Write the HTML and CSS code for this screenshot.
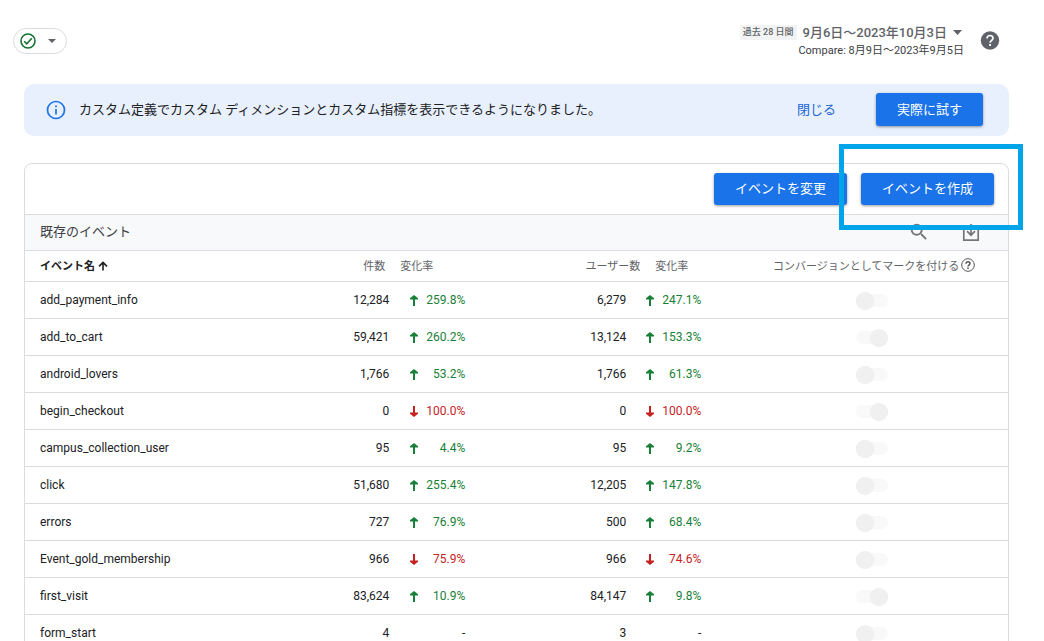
FILE: index.html
```
<!DOCTYPE html>
<html lang="ja">
<head>
<meta charset="utf-8">
<meta name="viewport" content="width=device-width, initial-scale=1">
<title>イベント</title>
<link rel="stylesheet" href="styles.css">
</head>
<body>
<svg class="sprite" aria-hidden="true">
  <symbol id="up" viewBox="0 0 10 12"><path d="M4 12V5.500H1V4.300L5 1l4 3.300v1.200H6V12z" fill="currentColor"/></symbol>
  <symbol id="down" viewBox="0 0 10 12"><path d="M4 1v6.500H1v1.200L5 12l4-3.300V7.500H6V1z" fill="currentColor"/></symbol>
</svg>
<header class="topbar">
  <button class="status" type="button" aria-label="ステータス">
    <svg width="18" height="18" viewBox="0 0 18 18" fill="none" stroke="#137333" stroke-width="1.600"><circle cx="9" cy="9" r="7"/><path d="M5.200 9.200 7.800 11.800l5-5.600"/></svg>
    <svg width="8" height="4" viewBox="0 0 8 4"><path d="M0 0h8L4 4z" fill="#5f6368"/></svg>
  </button>
  <div class="dates">
    <button class="range" type="button">
      <span class="badge">過去 28 日間</span>
      <span>9月6日～2023年10月3日</span>
      <svg width="9" height="5" viewBox="0 0 9 5"><path d="M0 0h9L4.500 5z" fill="#5f6368"/></svg>
    </button>
    <div class="compare">Compare: 8月9日～2023年9月5日</div>
  </div>
  <button class="icon-button" type="button" aria-label="ヘルプ">
    <svg width="20" height="20" viewBox="0 0 20 20"><circle cx="10" cy="9.500" r="9.200" fill="#5f6368"/><path d="M7 7.500c0-1.800 1.300-3 3-3s3 1.100 3 2.700c0 2-2.900 2.300-2.900 4.500" fill="none" stroke="#fff" stroke-width="1.700"/><path d="M9.200 13.100H11v1.800H9.200z" fill="#fff"/></svg>
  </button>
</header>
<main class="content">
  <section class="banner">
    <svg width="20" height="20" viewBox="0 0 20 20" fill="none" stroke="#1a73e8" stroke-width="1.700"><circle cx="10" cy="10" r="8.500"/><path d="M10 9v5.500M10 5.500v1.800"/></svg>
    <p class="message">カスタム定義でカスタム ディメンションとカスタム指標を表示できるようになりました。</p>
    <button class="text-button" type="button">閉じる</button>
    <button class="primary" type="button">実際に試す</button>
  </section>
  <section class="card">
    <div class="actions">
      <button class="primary wide" type="button">イベントを変更</button>
      <button class="primary wide" type="button">イベントを作成</button>
    </div>
    <div class="section-head">
      <h2>既存のイベント</h2>
      <button class="icon-button" type="button" aria-label="検索"><svg width="22" height="22" viewBox="0 0 24 24" fill="#757575"><path d="M15.500 14h-.79l-.28-.27A6.470 6.470 0 0 0 16 9.500 6.500 6.500 0 1 0 9.500 16c1.610 0 3.090-.59 4.230-1.570l.27.28v.79l5 4.990L20.490 19zm-6 0a4.500 4.500 0 1 1 0-9 4.500 4.500 0 0 1 0 9z"/></svg></button>
      <button class="icon-button" type="button" aria-label="ダウンロード"><svg width="22" height="22" viewBox="0 0 22 22" fill="none" stroke="#757575" stroke-width="1.700"><path d="M6 5.800H3.800v13.400h14.400V5.800H16M11 3v11M7 10.200l4 4 4-4"/></svg></button>
    </div>
    <table class="events">
      <colgroup><col class="c-name"><col class="c-count"><col class="c-change"><col class="c-users"><col class="c-change2"><col></colgroup>
      <thead>
        <tr>
          <th class="name">イベント名 <svg width="10" height="10" viewBox="0 0 10 10" fill="none" stroke="currentColor" stroke-width="1.600"><path d="M5 9.500V1.500M1 5.400 5 1.400l4 4"/></svg></th>
          <th class="count">件数</th><th class="change">変化率</th>
          <th class="users">ユーザー数</th><th class="change second">変化率</th>
          <th class="mark"><span class="mark-label">コンバージョンとしてマークを付ける <svg width="14" height="14" viewBox="0 0 14 14" fill="none" stroke="#555"><circle cx="7" cy="7" r="6.300"/><path d="M5 5.800C5 4.500 5.800 3.800 7 3.800s2 .7 2 1.800c0 1.400-2 1.500-2 3M7 9.500v1.500" stroke-width="1.500"/></svg></span></th>
        </tr>
      </thead>
      <tbody>
        <tr><td class="name">add_payment_info</td><td class="count">12,284</td><td class="change"><span class="delta up"><svg><use href="#up"/></svg>259.8%</span></td><td class="users">6,279</td><td class="change"><span class="delta up"><svg><use href="#up"/></svg>247.1%</span></td><td class="mark"><input class="switch" type="checkbox" aria-label="add_payment_info" disabled></td></tr>
        <tr><td class="name">add_to_cart</td><td class="count">59,421</td><td class="change"><span class="delta up"><svg><use href="#up"/></svg>260.2%</span></td><td class="users">13,124</td><td class="change"><span class="delta up"><svg><use href="#up"/></svg>153.3%</span></td><td class="mark"><input class="switch" type="checkbox" aria-label="add_to_cart" checked disabled></td></tr>
        <tr><td class="name">android_lovers</td><td class="count">1,766</td><td class="change"><span class="delta up"><svg><use href="#up"/></svg>53.2%</span></td><td class="users">1,766</td><td class="change"><span class="delta up"><svg><use href="#up"/></svg>61.3%</span></td><td class="mark"><input class="switch" type="checkbox" aria-label="android_lovers" disabled></td></tr>
        <tr><td class="name">begin_checkout</td><td class="count">0</td><td class="change"><span class="delta down"><svg><use href="#down"/></svg>100.0%</span></td><td class="users">0</td><td class="change"><span class="delta down"><svg><use href="#down"/></svg>100.0%</span></td><td class="mark"><input class="switch" type="checkbox" aria-label="begin_checkout" checked disabled></td></tr>
        <tr><td class="name">campus_collection_user</td><td class="count">95</td><td class="change"><span class="delta up"><svg><use href="#up"/></svg>4.4%</span></td><td class="users">95</td><td class="change"><span class="delta up"><svg><use href="#up"/></svg>9.2%</span></td><td class="mark"><input class="switch" type="checkbox" aria-label="campus_collection_user" disabled></td></tr>
        <tr><td class="name">click</td><td class="count">51,680</td><td class="change"><span class="delta up"><svg><use href="#up"/></svg>255.4%</span></td><td class="users">12,205</td><td class="change"><span class="delta up"><svg><use href="#up"/></svg>147.8%</span></td><td class="mark"><input class="switch" type="checkbox" aria-label="click" disabled></td></tr>
        <tr><td class="name">errors</td><td class="count">727</td><td class="change"><span class="delta up"><svg><use href="#up"/></svg>76.9%</span></td><td class="users">500</td><td class="change"><span class="delta up"><svg><use href="#up"/></svg>68.4%</span></td><td class="mark"><input class="switch" type="checkbox" aria-label="errors" disabled></td></tr>
        <tr><td class="name">Event_gold_membership</td><td class="count">966</td><td class="change"><span class="delta down"><svg><use href="#down"/></svg>75.9%</span></td><td class="users">966</td><td class="change"><span class="delta down"><svg><use href="#down"/></svg>74.6%</span></td><td class="mark"><input class="switch" type="checkbox" aria-label="Event_gold_membership" disabled></td></tr>
        <tr><td class="name">first_visit</td><td class="count">83,624</td><td class="change"><span class="delta up"><svg><use href="#up"/></svg>10.9%</span></td><td class="users">84,147</td><td class="change"><span class="delta up"><svg><use href="#up"/></svg>9.8%</span></td><td class="mark"><input class="switch" type="checkbox" aria-label="first_visit" checked disabled></td></tr>
        <tr><td class="name">form_start</td><td class="count">4</td><td class="change">-</td><td class="users">3</td><td class="change">-</td><td class="mark"><input class="switch" type="checkbox" aria-label="form_start" disabled></td></tr>
      </tbody>
    </table>
    <div class="highlight"></div>
  </section>
</main>
</body>
</html>
```
FILE: styles.css
```
* {
  box-sizing: border-box;
}

body {
  margin: 0;
  background: #fff;
  color: #202124;
  font-family: Roboto, "Noto Sans CJK JP", sans-serif;
  font-size: 12px;
}

button {
  margin: 0;
  padding: 0;
  border: 0;
  background: none;
  color: inherit;
  font: inherit;
  cursor: pointer;
}

svg {
  flex: none;
}

.sprite {
  display: none;
}

.topbar {
  display: flex;
  align-items: center;
  padding: 23px 44px 25px 13px;
}

.status {
  display: flex;
  align-items: center;
  gap: 11px;
  padding: 3px 10px 3px 5px;
  border: 1px solid #dadce0;
  border-radius: 13px;
}

.dates {
  display: flex;
  flex-direction: column;
  align-items: flex-end;
  margin-left: auto;
  margin-right: 16px;
}

.range {
  display: flex;
  align-items: center;
  gap: 6px;
  padding-right: 2px;
  color: #5f6368;
  font-size: 13px;
  font-weight: 500;
  line-height: 19px;
}

.badge {
  padding: 0 3px;
  background: #f1f3f4;
  font-size: 9px;
  line-height: 15px;
}

.compare {
  color: #3c4043;
  font-size: 11px;
  line-height: 17px;
}

.icon-button {
  display: flex;
}

.content {
  padding: 0 35px 0 24px;
}

.banner {
  display: flex;
  align-items: center;
  padding: 9px 26px 10px 22px;
  border-radius: 10px;
  background: #e8f0fe;
}

.message {
  flex: 1;
  margin: 0 0 0 13px;
  padding-bottom: 3px;
  font-size: 13px;
}

.text-button {
  margin-right: 40px;
  padding-bottom: 3px;
  color: #1967d2;
  font-size: 13px;
}

.primary {
  padding: 0 21px;
  border-radius: 3px;
  background: #1a73e8;
  box-shadow: 0 1px 3px rgba(0, 0, 0, 0.4);
  color: #fff;
  font-size: 13px;
  line-height: 33px;
}

.wide {
  line-height: 32px;
}

.card {
  position: relative;
  margin-top: 27px;
  border: 1px solid #dadce0;
  border-radius: 8px 8px 0 0;
}

.actions {
  display: flex;
  justify-content: flex-end;
  gap: 14px;
  padding: 9px 14px;
}

.section-head {
  display: flex;
  align-items: center;
  gap: 30px;
  padding: 5px 26px 7px 15px;
  border-top: 1px solid #dadce0;
  border-bottom: 1px solid #dadce0;
  background: #f8f9fb;
}

.section-head h2 {
  flex: 1;
  margin: 0;
  color: #3c4043;
  font-size: 13px;
  font-weight: 400;
  line-height: 23px;
}

.events {
  width: 100%;
  table-layout: fixed;
  border-collapse: separate;
  border-spacing: 0;
}

.c-name { width: 28%; }
.c-count { width: 93px; }
.c-change { width: 87px; }
.c-users { width: 161px; }
.c-change2 { width: 75px; }

.events th,
.events td {
  height: 37px;
  padding: 0;
  border-bottom: 1px solid #dadce0;
  text-align: right;
  white-space: nowrap;
}

.events th {
  height: 31px;
  padding-bottom: 2px;
  color: #5f6368;
  font-size: 11px;
  font-weight: 400;
}

.events .name {
  padding-left: 15px;
  text-align: left;
}

.events th.name {
  color: #202124;
  font-weight: 700;
}

th.name svg {
  vertical-align: -1px;
}

.events th.count { padding-right: 8px; }
.events td.count { padding-right: 4px; }
.events th.users { padding-right: 1px; }
.events td.users { padding-right: 15px; }
.events td.change { padding-right: 15px; }

.events th.change {
  padding-left: 7px;
  text-align: left;
}

.events th.second {
  padding-left: 14px;
}

.events .mark {
  padding-left: 20px;
  text-align: center;
}

.events th.mark {
  padding-left: 24px;
}

.mark-label {
  display: inline-flex;
  align-items: center;
  gap: 2px;
}

.delta {
  display: inline-flex;
  align-items: center;
  justify-content: space-between;
  width: 56px;
  line-height: 14px;
  vertical-align: middle;
}

.delta svg {
  width: 10px;
  height: 12px;
}

.up { color: #188038; }
.down { color: #c5221f; }

.switch {
  display: inline-flex;
  align-items: center;
  width: 32px;
  height: 13px;
  margin: 0;
  border-radius: 7px;
  background: #f9f9f9;
  vertical-align: middle;
  appearance: none;
}

.switch::before {
  content: "";
  flex: none;
  width: 18px;
  height: 18px;
  border-radius: 50%;
  background: #f0f0f0;
  box-shadow: 0 0 1px rgba(0, 0, 0, 0.06);
}

.switch:checked {
  justify-content: flex-end;
}

/* Callout frame drawn over the create button */
.highlight {
  position: absolute;
  top: -20px;
  right: -15px;
  width: 184px;
  height: 86px;
  border: 5px solid #00a4e8;
  pointer-events: none;
}
```
